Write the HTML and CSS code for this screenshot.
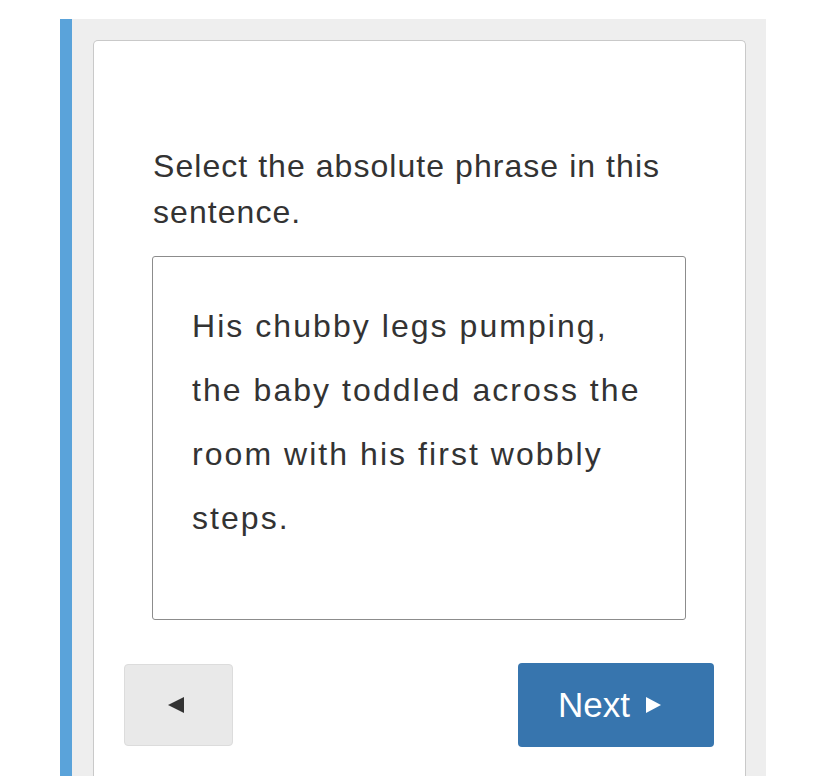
FILE: index.html
```html
<!DOCTYPE html>
<html lang="en">
<head>
    <meta charset="UTF-8">
    <meta name="viewport" content="width=device-width, initial-scale=1.0">
    <title>Absolute Phrase</title>
    <link rel="stylesheet" href="styles.css">
</head>
<body>
    <div class="lesson">
        <div class="card">
            <p class="prompt">Select the absolute phrase in this sentence.</p>

            <div class="sentence-box">
                <p class="sentence">His chubby legs pumping, the baby toddled across the room with his first wobbly steps.</p>
            </div>

            <div class="nav">
                <button class="btn btn-prev" aria-label="Previous">
                    <svg width="16" height="16" viewBox="0 0 16 16"><path d="M0 8 L16 0 L16 16 Z" fill="#333"/></svg>
                </button>
                <button class="btn btn-next">
                    Next
                    <svg width="15" height="16" viewBox="0 0 15 16"><path d="M0 0 L15 8 L0 16 Z" fill="#fff"/></svg>
                </button>
            </div>
        </div>
    </div>
</body>
</html>
```

FILE: styles.css
```css
body {
    font-family: "Liberation Sans", Arial, sans-serif;
    margin: 0;
    padding: 0;
    background-color: #fff;
    color: #333;
}
.lesson {
    margin: 19px 0 0 60px;
    width: 653px;
    border-left: 12px solid #5aa3da;
    background-color: #eee;
    padding: 21px 20px 0 21px;
}
.card {
    background-color: #fff;
    border: 1px solid #c9c9c9;
    border-bottom: none;
    border-radius: 5px 5px 0 0;
    padding: 102px 59px 80px 58px;
}
.prompt {
    margin: 0;
    padding-left: 1px;
    font-size: 32px;
    line-height: 46px;
    letter-spacing: 1.05px;
}
.sentence-box {
    margin-top: 21px;
    border: 1px solid #8c8c8c;
    border-radius: 3px;
    height: 364px;
    padding: 37px 34px 0 39px;
    box-sizing: border-box;
}
.sentence {
    margin: 0;
    font-size: 32px;
    line-height: 64px;
    letter-spacing: 2.05px;
}
.nav {
    display: flex;
    justify-content: space-between;
    align-items: center;
    margin: 43px -28px 0 -28px;
}
.btn {
    font-family: inherit;
    height: 84px;
    border-radius: 4px;
    cursor: pointer;
    display: flex;
    align-items: center;
}
.btn-prev {
    width: 109px;
    height: 82px;
    background-color: #e9e9e9;
    border: 1px solid #dcdcdc;
    justify-content: center;
    padding: 0 6px 0 0;
}
.btn-next {
    width: 196px;
    background-color: #3775ae;
    border: none;
    color: #fff;
    font-size: 35px;
    gap: 16px;
    padding: 0 0 0 40px;
}
```
